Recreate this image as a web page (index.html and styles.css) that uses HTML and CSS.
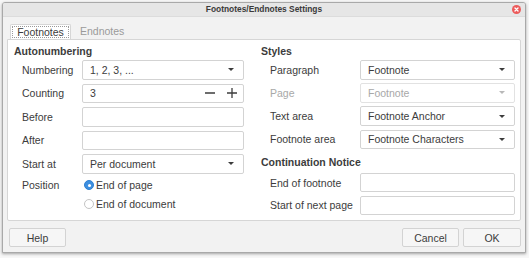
FILE: index.html
```html
<!DOCTYPE html>
<html>
<head>
<meta charset="utf-8">
<link rel="stylesheet" href="styles.css">
</head>
<body>
<div class="window">
  <div class="titlebar">
    <span class="title">Footnotes/Endnotes Settings</span>
    <span class="close"><svg width="9" height="9" viewBox="0 0 9 9"><circle cx="4.5" cy="4.5" r="4.5" fill="#ec5a5a"/><path d="M3 3 L6 6 M6 3 L3 6" stroke="#fff" stroke-width="1.4" stroke-linecap="round"/></svg></span>
  </div>
  <div class="content">
    <div class="tabs">
      <div class="tab active"><span class="focus">Footnotes</span></div>
      <div class="tab">Endnotes</div>
    </div>
    <div class="panel">
      <div class="col left">
        <div class="heading">Autonumbering</div>
        <div class="form lform">
          <label>Numbering</label>
          <div class="combo"><span>1, 2, 3, ...</span><i class="arrow"></i></div>
          <label>Counting</label>
          <div class="spin"><span class="val">3</span>
            <span class="sbtn"><svg width="12" height="12" viewBox="0 0 12 12"><path d="M1 6 H11" stroke="#3c3c3c" stroke-width="1.3"/></svg></span>
            <span class="sbtn"><svg width="12" height="12" viewBox="0 0 12 12"><path d="M1 6 H11 M6 1 V11" stroke="#3c3c3c" stroke-width="1.3"/></svg></span>
          </div>
          <label>Before</label>
          <div class="entry"></div>
          <label>After</label>
          <div class="entry"></div>
          <label>Start at</label>
          <div class="combo"><span>Per document</span><i class="arrow"></i></div>
        </div>
        <div class="position">
          <label>Position</label>
          <div class="radios">
            <div class="radio"><i class="dot on"></i>End of page</div>
            <div class="radio"><i class="dot"></i>End of document</div>
          </div>
        </div>
      </div>
      <div class="col right">
        <div class="heading">Styles</div>
        <div class="form rform">
          <label>Paragraph</label>
          <div class="combo"><span>Footnote</span><i class="arrow"></i></div>
          <label class="dis">Page</label>
          <div class="combo disabled"><span>Footnote</span><i class="arrow"></i></div>
          <label>Text area</label>
          <div class="combo"><span>Footnote Anchor</span><i class="arrow"></i></div>
          <label>Footnote area</label>
          <div class="combo"><span>Footnote Characters</span><i class="arrow"></i></div>
        </div>
        <div class="heading cont">Continuation Notice</div>
        <div class="form cform">
          <label>End of footnote</label>
          <div class="entry"></div>
          <label>Start of next page</label>
          <div class="entry"></div>
        </div>
      </div>
    </div>
    <div class="buttons">
      <div class="btn help">Help</div>
      <div class="spacer"></div>
      <div class="btn">Cancel</div>
      <div class="btn">OK</div>
    </div>
  </div>
</div>
</body>
</html>
```

FILE: styles.css
```css
* { box-sizing: border-box; }
html, body { margin: 0; padding: 0; }
body {
  width: 529px;
  height: 258px;
  background: #f7f7f7;
  font-family: "Liberation Sans", Arial, sans-serif;
  font-size: 10.5px;
  color: #3c3c3c;
  overflow: hidden;
}
.window {
  margin: 2px 0 0 2px;
  width: 524px;
  height: 251px;
  border: 1px solid #a9a9a9;
  border-radius: 3px 3px 0 0;
  box-shadow: 0 1px 3px rgba(0,0,0,0.35);
  background: #f2f2f2;
  display: flex;
  flex-direction: column;
  overflow: hidden;
}
.titlebar {
  position: relative;
  height: 14px;
  background: #e6e6e6;
  border-bottom: 1px solid #dcdcdc;
  display: flex;
  align-items: center;
  justify-content: center;
}
.title {
  font-size: 8.4px;
  font-weight: bold;
  color: #3a3a3a;
  line-height: 13px;
}
.close {
  position: absolute;
  right: 4px;
  top: 2px;
  width: 9px;
  height: 9px;
  display: block;
}
.close svg { display: block; }
.content {
  flex: 1;
  display: flex;
  flex-direction: column;
  padding: 0 4px 0 4px;
}
.tabs {
  display: flex;
  align-items: flex-end;
  height: 22px;
  padding-left: 3px;
}
.tab {
  height: 15px;
  line-height: 14px;
  padding: 0 9px;
  color: #9a9a9a;
}
.tab.active {
  background: #fff;
  border: 1px solid #d6d6d6;
  border-bottom: none;
  border-radius: 2px 2px 0 0;
  color: #3c3c3c;
  padding: 1px 1px 0 1px;
  width: 61px;
  margin-right: 0;
}
.tab .focus {
  display: block;
  height: 12px;
  line-height: 11px;
  border: 1px dotted #9a9a9a;
  text-align: center;
}
.panel {
  height: 182px;
  background: #fff;
  border: 1px solid #d6d6d6;
  border-radius: 0 2px 2px 2px;
  display: flex;
  padding: 4px 5px 0 6px;
}
.col.left { width: 247px; }
.col.right { flex: 1; }
.heading {
  font-weight: bold;
  line-height: 14px;
  height: 14px;
  margin-bottom: 2px;
}
.form {
  display: grid;
  align-items: center;
}
.lform {
  padding-left: 8px;
  grid-template-columns: 60px 162px;
  grid-auto-rows: 19.5px;
  row-gap: 4px;
}
.rform {
  padding-left: 9px;
  grid-template-columns: 90px 155px;
  grid-auto-rows: 19.5px;
  row-gap: 3.7px;
}
.cform {
  padding-left: 9px;
  grid-template-columns: 90px 155px;
  grid-auto-rows: 19px;
  row-gap: 3.5px;
}
.heading.cont { margin-top: 6px; margin-bottom: 4px; }
label { white-space: nowrap; }
label.dis { color: #a8a8a8; }
.combo, .entry, .spin {
  height: 100%;
  border: 1px solid #d3d3d3;
  border-radius: 2px;
  background: #fff;
}
.combo {
  display: flex;
  align-items: center;
  padding: 0 9px 0 7px;
}
.combo span { flex: 1; white-space: nowrap; }
.arrow {
  width: 0;
  height: 0;
  border-left: 3.5px solid transparent;
  border-right: 3.5px solid transparent;
  border-top: 3.5px solid #3c3c3c;
}
.combo.disabled { color: #a8a8a8; border-color: #e2e2e2; }
.combo.disabled .arrow { border-top-color: #b8b8b8; }
.spin {
  display: flex;
  align-items: stretch;
}
.spin .val { flex: 1; padding-left: 7px; display: flex; align-items: center; }
.sbtn {
  width: 22px;
  display: flex;
  align-items: center;
  justify-content: center;
}
.sbtn:first-of-type { border-left: 1px solid #d8d8d8; }
.sbtn svg { display: block; }
.position {
  display: grid;
  grid-template-columns: 60px 162px;
  padding-left: 8px;
  margin-top: 2px;
}
.position label { line-height: 19px; }
.radio {
  height: 19px;
  display: flex;
  align-items: center;
  gap: 2px;
  padding-left: 2px;
}
.dot {
  width: 10px;
  height: 10px;
  border-radius: 50%;
  border: 1px solid #c4c4c4;
  background: #fff;
  display: block;
}
.dot.on {
  background: #3d8fe0;
  border-color: #2f80d2;
  position: relative;
}
.dot.on::after {
  content: "";
  position: absolute;
  left: 2.5px;
  top: 2.5px;
  width: 3px;
  height: 3px;
  border-radius: 50%;
  background: #fff;
}
.buttons {
  display: flex;
  gap: 4px;
  margin-top: 7px;
  padding-left: 2px;
}
.spacer { flex: 1; }
.btn {
  width: 57px;
  height: 19px;
  border: 1px solid #d3d3d3;
  border-radius: 2px;
  background: #f6f6f6;
  display: flex;
  align-items: center;
  justify-content: center;
}
.btn:last-child { width: 58px; }
```
